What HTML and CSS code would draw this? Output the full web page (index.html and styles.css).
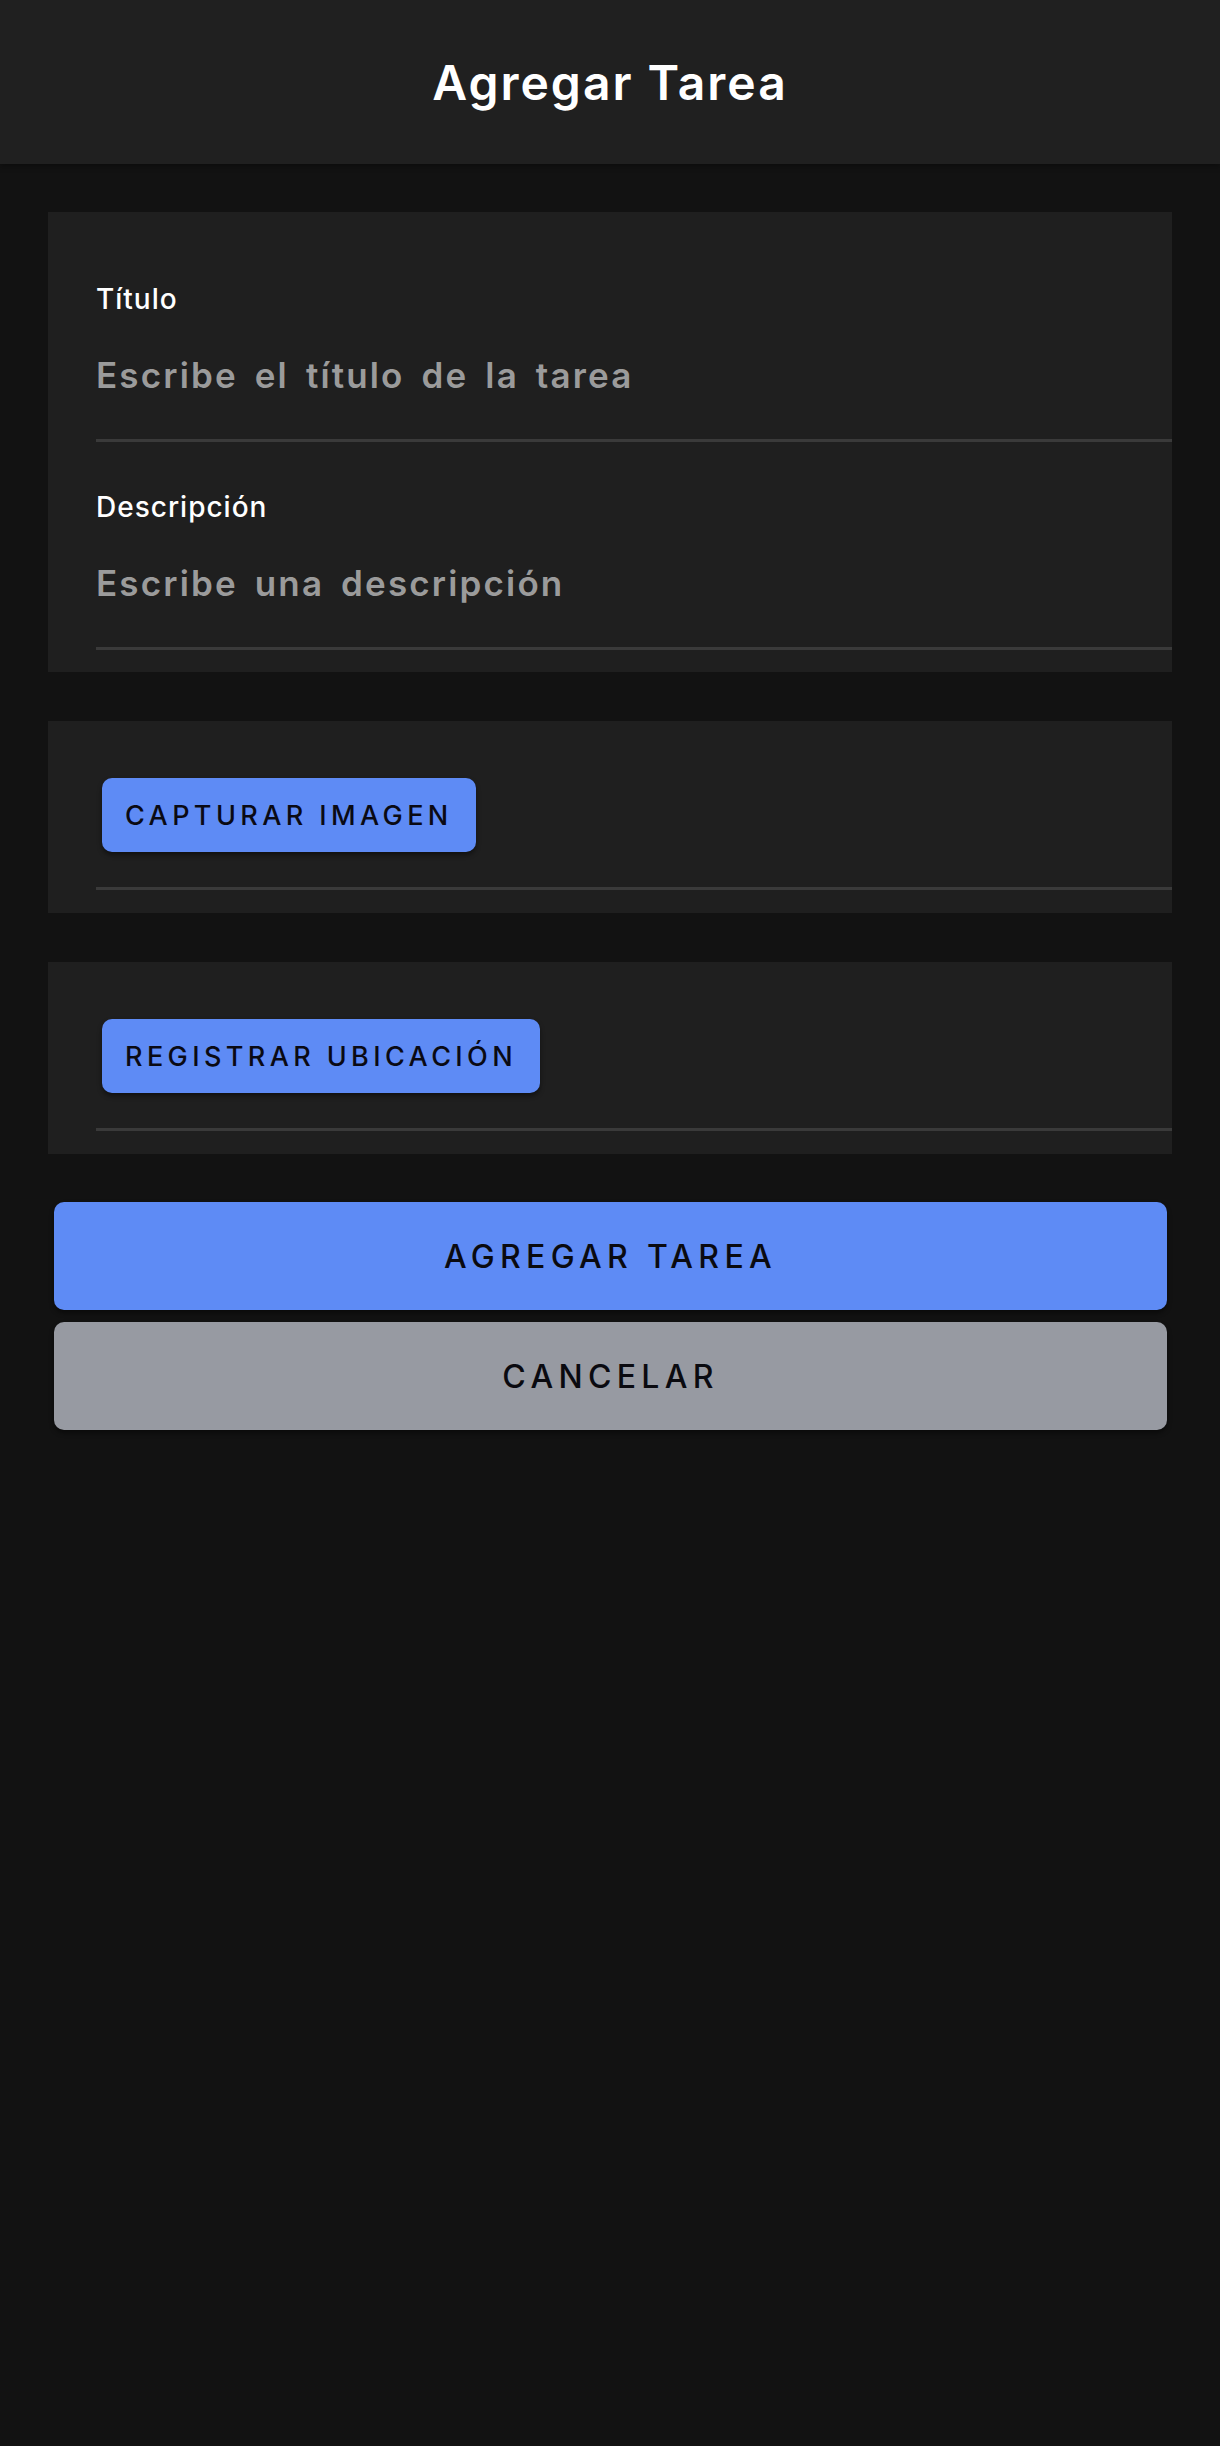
FILE: index.html
```html
<!DOCTYPE html>
<html lang="es">
<head>
<meta charset="utf-8">
<title>Agregar Tarea</title>
<link rel="stylesheet" href="styles.css">
</head>
<body>
<header class="topbar">
  <h1 class="topbar-title">Agregar Tarea</h1>
</header>
<main class="content">
  <section class="card card-fields">
    <div class="field">
      <label class="field-label">Título</label>
      <div class="field-input">Escribe el título de la tarea</div>
    </div>
    <div class="field">
      <label class="field-label">Descripción</label>
      <div class="field-input">Escribe una descripción</div>
    </div>
  </section>
  <section class="card card-action">
    <div class="action-row">
      <button class="btn-small">CAPTURAR IMAGEN</button>
    </div>
  </section>
  <section class="card card-action">
    <div class="action-row">
      <button class="btn-small">REGISTRAR UBICACIÓN</button>
    </div>
  </section>
  <div class="actions">
    <button class="btn-large btn-primary">AGREGAR TAREA</button>
    <button class="btn-large btn-secondary">CANCELAR</button>
  </div>
</main>
</body>
</html>
```

FILE: styles.css
```css
* { box-sizing: border-box; }
html, body {
  margin: 0;
  padding: 0;
  background: #121212;
  font-family: Inter, "Noto Sans", sans-serif;
  color: #ffffff;
}
body { min-height: 2446px; }

.topbar {
  height: 164px;
  background: #202020;
  display: flex;
  align-items: center;
  justify-content: center;
  box-shadow: 0 2px 6px rgba(0,0,0,0.35);
  position: relative;
}
.topbar-title {
  margin: 0;
  font-size: 48px;
  font-weight: 600;
  letter-spacing: 2px;
  line-height: 1;
  color: #ffffff;
  padding-top: 2px;
}

.content {
  padding: 48px 48px 0 48px;
  display: flex;
  flex-direction: column;
}

.card {
  background: #1f1f1f;
}
.card + .card { margin-top: 49px; }

.card-fields {
  padding: 22px 0 22px 48px;
}
.field {
  padding-top: 48px;
  border-bottom: 3px solid #3a3a3a;
  display: flex;
  flex-direction: column;
}
.field-label {
  font-size: 28px;
  line-height: 34px;
  font-weight: 500;
  letter-spacing: 1px;
  color: #ffffff;
}
.field-input {
  margin-top: 38px;
  margin-bottom: 43px;
  font-size: 35px;
  line-height: 42px;
  font-weight: 600;
  letter-spacing: 2.15px;
  word-spacing: 6px;
  color: #9b9b9b;
}

.card-action {
  padding: 22px 0 23px 48px;
}
.action-row {
  padding: 35px 0 35px 6px;
  border-bottom: 3px solid #3a3a3a;
}
.btn-small {
  display: block;
  height: 74px;
  padding: 0 23px;
  border: none;
  border-radius: 10px;
  background: #5e8bf5;
  color: #0a0a14;
  font-family: Inter, "Noto Sans", sans-serif;
  font-size: 27px;
  font-weight: 500;
  letter-spacing: 4.4px;
  box-shadow: 0 3px 5px rgba(0,0,0,0.45);
}

.actions {
  margin-top: 48px;
  padding: 0 5px 0 6px;
  display: flex;
  flex-direction: column;
  gap: 12px;
}
.btn-large {
  height: 108px;
  border: none;
  border-radius: 10px;
  font-family: Inter, "Noto Sans", sans-serif;
  font-size: 32px;
  font-weight: 500;
  letter-spacing: 5.3px;
  color: #0a0a10;
  box-shadow: 0 3px 5px rgba(0,0,0,0.45);
}
.btn-primary { background: #5e8bf5; }
.btn-secondary { background: #979aa2; }
```
